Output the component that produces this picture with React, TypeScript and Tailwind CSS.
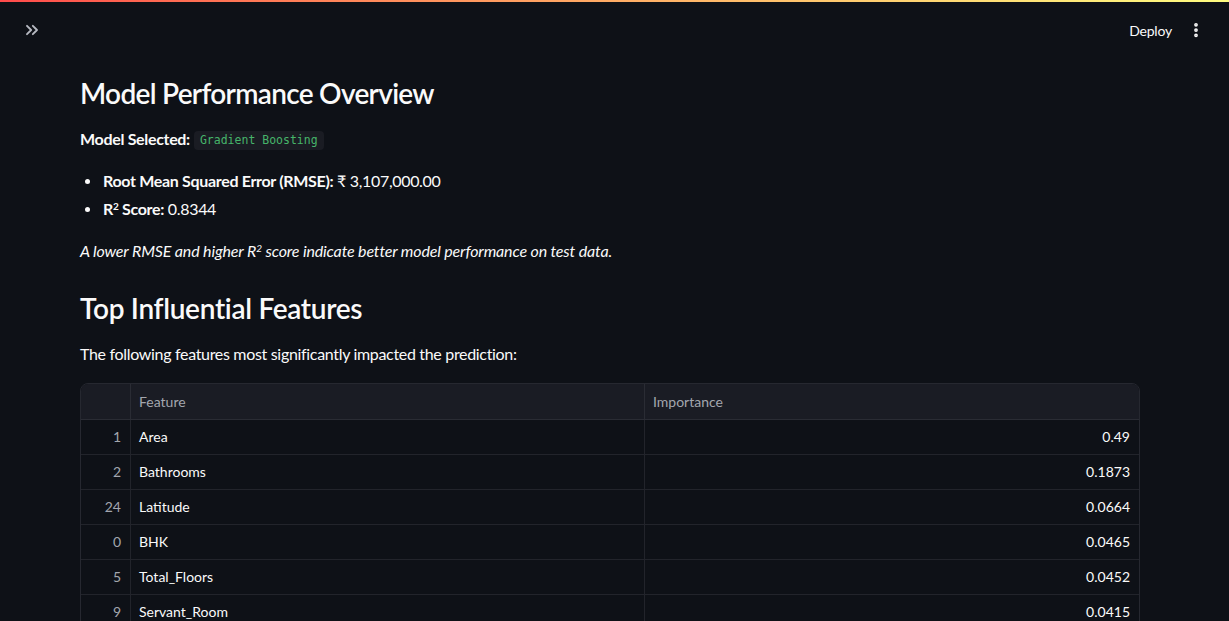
import React from 'react';
import { ChevronsRight, EllipsisVertical } from 'lucide-react';

const rows = [
  { idx: 1, feature: 'Area', importance: '0.49' },
  { idx: 2, feature: 'Bathrooms', importance: '0.1873' },
  { idx: 24, feature: 'Latitude', importance: '0.0664' },
  { idx: 0, feature: 'BHK', importance: '0.0465' },
  { idx: 5, feature: 'Total_Floors', importance: '0.0452' },
  { idx: 9, feature: 'Servant_Room', importance: '0.0415' },
];

export default function App() {
  return (
    <div
      className="h-screen overflow-hidden bg-[#0e1117] text-[#fafafa]"
      style={{ fontFamily: 'Lato, "Noto Sans", sans-serif' }}
    >
      {/* top decoration line */}
      <div className="h-[2px] bg-gradient-to-r from-[#ff4b4b] to-[#fffd80]" />

      {/* header */}
      <div className="h-[56px] flex items-center justify-between pl-[22px] pr-[24px]">
        <ChevronsRight className="w-[20px] h-[20px] text-[#b6b9c1]" strokeWidth={2.25} />
        <div className="flex items-center gap-[15px]">
          <span className="text-[14px] text-[#fafafa] tracking-[-0.2px]">Deploy</span>
          <EllipsisVertical className="w-[18px] h-[18px] text-[#fafafa]" strokeWidth={3} />
        </div>
      </div>

      <main className="w-[1060px] ml-[80px] flex flex-col tracking-[-0.32px]">
        <h3 className="mt-[15px] text-[28px] leading-[40px] font-semibold tracking-[-0.7px]">
          Model Performance Overview
        </h3>

        <div className="mt-[14px] h-[24px] flex items-center text-[16px]">
          <span className="font-bold">Model Selected:</span>
          <code
            className="ml-[4px] mt-[3px] px-[6px] py-[1px] rounded-[4px] bg-[#1a1c23] text-[#46b46a] text-[11.5px] tracking-normal"
            style={{ fontFamily: '"DejaVu Sans Mono", "Liberation Mono", monospace' }}
          >
            Gradient Boosting
          </code>
        </div>

        <ul className="mt-[16px] flex flex-col text-[16px]">
          <li className="h-[28px] flex items-center">
            <span className="w-[5px] h-[5px] rounded-full bg-[#fafafa] ml-[5px] mr-[13px]" />
            <span>
              <b>Root Mean Squared Error (RMSE):</b> ₹ 3,107,000.00
            </span>
          </li>
          <li className="h-[28px] flex items-center">
            <span className="w-[5px] h-[5px] rounded-full bg-[#fafafa] ml-[5px] mr-[13px]" />
            <span>
              <b>
                R<sup className="text-[10px]">2</sup> Score:
              </b>{' '}
              0.8344
            </span>
          </li>
        </ul>

        <p className="mt-[16px] h-[24px] leading-[24px] text-[16px] italic tracking-[-0.15px]">
          A lower RMSE and higher R<sup className="text-[10px]">2</sup> score indicate better model performance on test data.
        </p>

        <h3 className="mt-[25px] text-[28px] leading-[40px] font-semibold tracking-[-0.3px]">
          Top Influential Features
        </h3>

        <p className="mt-[14px] h-[24px] leading-[24px] text-[16px]">
          The following features most significantly impacted the prediction:
        </p>

        {/* data table */}
        <div className="mt-[17px] border border-[#262830] rounded-t-[8px] overflow-hidden text-[14px] tracking-normal">
          <div className="grid grid-cols-[50px_514px_1fr] h-[36px] bg-[#1a1c24] border-b border-[#2a2c34] text-[#a3a6ae]">
            <div className="border-r border-[#2a2c34]" />
            <div className="flex items-center px-[8px] border-r border-[#2a2c34]">Feature</div>
            <div className="flex items-center px-[8px]">Importance</div>
          </div>
          {rows.map((r) => (
            <div
              key={r.idx}
              className="grid grid-cols-[50px_514px_1fr] h-[35px] border-b border-[#22242b]"
            >
              <div className="flex items-center justify-end pr-[9px] pb-[2px] text-[#a3a6ae] border-r border-[#22242b]">
                {r.idx}
              </div>
              <div className="flex items-center px-[8px] pb-[2px] border-r border-[#22242b]">{r.feature}</div>
              <div className="flex items-center justify-end px-[9px] pb-[2px]">{r.importance}</div>
            </div>
          ))}
        </div>
      </main>
    </div>
  );
}
